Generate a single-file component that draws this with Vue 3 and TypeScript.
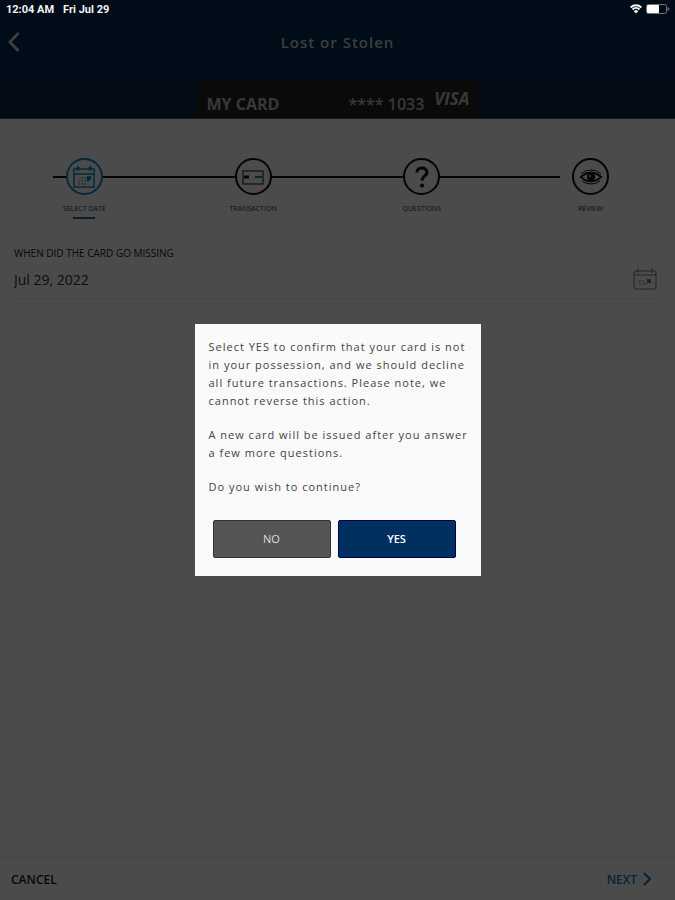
<script setup lang="ts">
import { ref } from 'vue'

interface Step {
  id: string
  label: string
}

const steps: Step[] = [
  { id: 'date', label: 'SELECT DATE' },
  { id: 'transaction', label: 'TRANSACTION' },
  { id: 'questions', label: 'QUESTIONS' },
  { id: 'review', label: 'REVIEW' },
]

const current = ref('date')
const dateMissing = ref('Jul 29, 2022')
const dialogOpen = ref(true)

const paragraphs: string[] = [
  'Select YES to confirm that your card is not in your possession, and we should decline all future transactions. Please note, we cannot reverse this action.',
  'A new card will be issued after you answer a few more questions.',
  'Do you wish to continue?',
]

function answer() {
  dialogOpen.value = false
}
</script>

<template>
  <div class="screen">
    <div class="status">
      <span class="clock">12:04 AM</span>
      <span>Fri Jul 29</span>
      <svg class="wifi" viewBox="0 0 12 10" aria-hidden="true">
        <path d="M.6 3.5a7.8 7.8 0 0 1 10.8 0M2.5 5.5a5 5 0 0 1 7 0" />
        <path class="fill" d="M3.8 7.2a3.1 3.1 0 0 1 4.4 0L6 9.6z" />
      </svg>
      <svg class="battery" viewBox="0 0 24 10" aria-hidden="true">
        <rect class="case" x=".5" y=".5" width="20" height="9" rx="2" />
        <rect class="level" x="1" y="1" width="12" height="8" rx="1" />
        <path class="tip" d="M21.5 3v4q2-.5 2-2t-2-2z" />
      </svg>
    </div>

    <header class="header">
      <button class="back" type="button" aria-label="Back">
        <svg viewBox="0 0 12 20" aria-hidden="true"><path d="M10.5 1 2 10l8.500 9" /></svg>
      </button>
      <h1>Lost or Stolen</h1>
    </header>

    <div class="band">
      <div class="card">
        <span class="card-name">MY CARD</span>
        <span>**** 1033</span>
        <span class="visa">VISA</span>
      </div>
    </div>

    <main>
      <ol class="steps">
        <li v-for="step in steps" :key="step.id" :class="{ active: step.id === current }">
          <span class="circle">
            <svg v-if="step.id === 'date'" viewBox="0 0 24 24" aria-hidden="true">
              <path d="M2 4h20v18H2zM2 9h20M6 1v5M18 1v5M4 4l2-2 2 2M16 4l2-2 2 2" />
              <path class="dots" d="M9 13h6M6 16h12M6 19h9" />
              <path class="solid" d="M15 11h4v3l-2 2h-2z" />
            </svg>
            <svg v-else-if="step.id === 'transaction'" viewBox="0 0 24 24" aria-hidden="true">
              <rect class="thin" x="2" y="6" width="20" height="13" />
              <path class="chip" d="M3 12h5" />
              <path class="stripe" d="M14 12h7" />
            </svg>
            <svg v-else-if="step.id === 'questions'" viewBox="0 0 24 24" aria-hidden="true">
              <path class="question" d="M7 7.500C7 4 9.500 3 12 3s5 1.500 5 4.500c0 3.500-5 3.500-5 8" />
              <circle class="solid" cx="12" cy="20.500" r="2.100" />
            </svg>
            <svg v-else viewBox="0 0 24 24" aria-hidden="true">
              <path d="M1 12q5-5 11-5t11 5q-5 5-11 5T1 12zM2 9q4-4 10-4t10 4M3 16q4 3 9 3t9-3" class="thin" />
              <path d="M2 12q5-4 10-4t10 4q-5 4-10 4T2 12z" />
              <circle class="solid" cx="12" cy="12" r="4" />
              <circle class="glint" cx="11" cy="11" r="1" />
            </svg>
          </span>
          <span class="step-label">{{ step.label }}</span>
        </li>
      </ol>

      <div class="field">
        <label for="missing-date">WHEN DID THE CARD GO MISSING</label>
        <div class="field-row">
          <input id="missing-date" v-model="dateMissing" type="text" />
          <button type="button" class="pick" aria-label="Pick a date">
            <svg viewBox="0 0 24 24" aria-hidden="true">
              <path d="M3 4h18q2 0 2 2v14q0 2-2 2H3q-2 0-2-2V6q0-2 2-2zM1 8h22M5 1v5M19 1v5" />
              <path class="dots" d="M6 14h6M6 17h9" />
              <path class="day" d="M14 12h4v4h-4z" />
            </svg>
          </button>
        </div>
      </div>
    </main>

    <footer class="footer">
      <button type="button">CANCEL</button>
      <button type="button" class="next">
        NEXT
        <svg viewBox="0 0 8 14" aria-hidden="true"><path d="m1 1 6 6-6 6" /></svg>
      </button>
    </footer>

    <div v-if="dialogOpen" class="overlay">
      <section class="dialog" role="dialog" aria-modal="true">
        <p v-for="text in paragraphs" :key="text">{{ text }}</p>
        <div class="actions">
          <button type="button" class="no" @click="answer">NO</button>
          <button type="button" class="yes" @click="answer">YES</button>
        </div>
      </section>
    </div>
  </div>
</template>

<style>
body {
  margin: 0;
}
</style>

<style scoped>
.screen {
  display: flex;
  flex-direction: column;
  min-height: 100vh;
  background: #fafafa;
  color: #222;
  font-family: "Open Sans", "Noto Sans", sans-serif;
}

button,
input {
  padding: 0;
  border: 0;
  background: none;
  color: inherit;
  font: inherit;
}

svg {
  display: block;
  fill: none;
  stroke: currentColor;
}

.status {
  display: flex;
  align-items: center;
  height: 18px;
  padding: 0 5px 0 6px;
  background: #000c17;
  color: #f4f4f4;
  font-family: Roboto, sans-serif;
  font-size: 11px;
  font-weight: 700;
  position: relative;
  z-index: 2;
}

.clock {
  margin-right: 9px;
}

.wifi {
  width: 12px;
  height: 10px;
  margin-left: auto;
  margin-right: 4px;
  stroke-width: 2;
}

.wifi .fill {
  fill: currentColor;
  stroke: none;
}

.battery {
  width: 24px;
  height: 10px;
}

.case {
  stroke: #777;
}

.level {
  fill: #fff;
  stroke: none;
}

.tip {
  fill: #666;
  stroke: none;
}

.header {
  display: grid;
  grid-template-columns: 24px 1fr 24px;
  align-items: center;
  height: 48px;
  padding: 0 8px;
  background: #00284d;
  color: #c8ccd2;
}

.back svg {
  width: 12px;
  height: 20px;
  stroke-width: 3;
}

h1 {
  margin: 0;
  font-size: 15px;
  font-weight: 600;
  letter-spacing: 1px;
  text-align: center;
}

.band {
  display: flex;
  justify-content: center;
  padding-top: 14px;
  background: #0a284b;
  border-bottom: 1px solid #555;
}

.card {
  display: flex;
  box-sizing: border-box;
  width: 280px;
  height: 38px;
  padding: 12px 8px 0 9px;
  background: #222;
  color: #bbb;
  font-size: 16px;
  font-weight: 600;
  line-height: 24px;
}

.card-name {
  margin-right: auto;
  font-weight: 700;
}

.visa {
  margin-left: 10px;
  font-size: 17px;
  font-style: italic;
  font-weight: 700;
  line-height: 14px;
}

.steps {
  display: grid;
  grid-template-columns: repeat(4, 1fr);
  margin: 0;
  padding: 39px 0 0;
  list-style: none;
  position: relative;
}

.steps::before {
  content: "";
  position: absolute;
  top: 57px;
  left: 53px;
  right: 115px;
  height: 2px;
  background: #111;
}

.steps li {
  display: flex;
  flex-direction: column;
  align-items: center;
}

.circle {
  display: grid;
  place-items: center;
  box-sizing: border-box;
  width: 37px;
  height: 37px;
  border: 2px solid #111;
  border-radius: 50%;
  background: #fafafa;
  color: #111;
  position: relative;
}

.circle svg {
  width: 24px;
  height: 24px;
  stroke-width: 1.5;
}

.circle .thin {
  stroke-width: 1;
}

.dots {
  stroke-width: 1;
  stroke-dasharray: 2 1;
}

.circle .solid {
  fill: currentColor;
  stroke: none;
}

.circle .question {
  stroke-width: 3;
}

.circle .chip {
  stroke-width: 3;
}

.circle .stripe {
  stroke: #1488c8;
  stroke-width: 2;
}

.glint {
  fill: #fafafa;
  stroke: none;
}

.active .circle {
  border-color: #1488c8;
  color: #1488c8;
}

.step-label {
  padding: 9px 0 3px;
  color: #333;
  font-size: 7px;
  line-height: 10px;
}

.active::after {
  content: "";
  width: 22px;
  height: 2px;
  background: #1c6aa8;
}

.field {
  margin: 27px 18px 0 14px;
  border-bottom: 1px solid #e6e6e6;
}

.field label {
  display: block;
  font-size: 10px;
  line-height: 14px;
}

.field-row {
  display: flex;
  align-items: center;
  justify-content: space-between;
  height: 38px;
}

.field input {
  flex: 1;
  min-width: 0;
  color: #333;
  font-size: 14px;
  outline: none;
}

.pick {
  color: #777;
}

.pick svg {
  width: 24px;
  height: 24px;
}

.day {
  fill: currentColor;
  stroke: none;
}

.footer {
  display: flex;
  justify-content: space-between;
  align-items: center;
  height: 42px;
  margin-top: auto;
  padding: 0 24px 0 11px;
  border-top: 1px solid #e2e2e2;
  font-size: 12px;
  font-weight: 600;
}

.next {
  display: flex;
  align-items: center;
  gap: 6px;
  color: #1478b8;
}

.next svg {
  width: 8px;
  height: 14px;
  stroke-width: 2;
}

.overlay {
  display: flex;
  align-items: center;
  justify-content: center;
  position: fixed;
  inset: 0;
  z-index: 1;
  background: rgba(0, 0, 0, 0.7);
}

.dialog {
  box-sizing: border-box;
  width: 286px;
  padding: 14px 8px 18px 14px;
  background: #fafafa;
  color: #444;
  font-size: 11px;
  line-height: 18px;
}

.dialog p {
  margin: 0 0 16px;
  letter-spacing: 1px;
}

.actions {
  display: grid;
  grid-template-columns: 1fr 1fr;
  gap: 7px;
  margin-top: 24px;
  padding: 0 17px 0 4px;
}

.actions button {
  height: 38px;
  border-radius: 2px;
  color: #fff;
}

.actions .no {
  border: 1px solid #333;
  background: #555;
  color: #ddd;
}

.actions .yes {
  border: 1px solid #00004f;
  background: #003060;
  font-weight: 600;
}
</style>
